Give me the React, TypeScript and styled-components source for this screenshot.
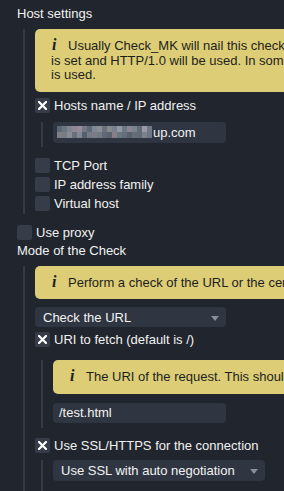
import React from "react"
import styled, { createGlobalStyle } from "styled-components"

const color = {
    bg: "#21262e",
    line: "#343b45",
    field: "#2f3641",
    box: "#363d48",
    help: "#dccd76",
    helpText: "#1e1e1e",
    text: "#f2f2f2",
    arrow: "#8b8f95",
}

const GlobalStyle = createGlobalStyle`
    html, body {
        margin: 0;
        padding: 0;
        overflow: hidden;
        background-color: ${color.bg};
    }
    body {
        font-family: "Liberation Sans", Arial, sans-serif;
        font-size: 13px;
        color: ${color.text};
    }
`

const Page = styled.div`
    width: 284px;
    height: 491px;
    overflow: hidden;
    padding: 6px 0 0 17px;
    box-sizing: border-box;
`

const Title = styled.div<{ $mt?: number }>`
    line-height: 16px;
    height: 16px;
    margin-top: ${p => p.$mt ?? 0}px;
    white-space: nowrap;
`

const Nest = styled.div<{ $mt?: number; $pb?: number }>`
    display: flex;
    flex-direction: column;
    align-items: flex-start;
    margin-left: 6px;
    margin-top: ${p => p.$mt ?? 0}px;
    padding-left: 10px;
    padding-bottom: ${p => p.$pb ?? 0}px;
    border-left: 2px solid ${color.line};
`

const Help = styled.div<{ $mt?: number }>`
    width: 600px;
    margin-top: ${p => p.$mt ?? 0}px;
    padding: 9px 16px;
    box-sizing: border-box;
    background-color: ${color.help};
    color: ${color.helpText};
    border-radius: 5px;
    line-height: 14.5px;
    white-space: nowrap;
`

const HelpIcon = styled.span`
    display: inline-block;
    width: 17px;
    padding-left: 1px;
    box-sizing: border-box;
    font-family: "Liberation Serif", "Times New Roman", serif;
    font-style: italic;
    font-weight: bold;
    font-size: 16px;
`

const Row = styled.label<{ $mt?: number }>`
    display: flex;
    align-items: center;
    gap: 4px;
    height: 15px;
    line-height: 15px;
    margin-top: ${p => p.$mt ?? 0}px;
    white-space: nowrap;
`

const Box = styled.span`
    display: flex;
    align-items: center;
    justify-content: center;
    width: 15px;
    height: 15px;
    border-radius: 2px;
    background-color: ${color.box};
`

const Field = styled.div<{ $w: number; $h: number; $pl: number; $mt?: number }>`
    display: flex;
    align-items: center;
    width: ${p => p.$w}px;
    height: ${p => p.$h}px;
    margin-top: ${p => p.$mt ?? 0}px;
    padding-left: ${p => p.$pl}px;
    box-sizing: border-box;
    border-radius: 4px;
    background-color: ${color.field};
    white-space: nowrap;
`

const Select = styled(Field)`
    justify-content: space-between;
    padding-right: 7px;
`

const Arrow = styled.span`
    width: 0;
    height: 0;
    margin-top: 2px;
    border-left: 4px solid transparent;
    border-right: 4px solid transparent;
    border-top: 5px solid ${color.arrow};
`

const Cross = () => (
    <svg width="9" height="9" viewBox="0 0 9 9">
        <path d="M1 1 L8 8 M8 1 L1 8" stroke="#ffffff" strokeWidth="2.2" strokeLinecap="square" />
    </svg>
)

const Check = ({ label, checked, mt }: { label: string; checked?: boolean; mt?: number }) => (
    <Row $mt={mt}>
        <Box>{checked && <Cross />}</Box>
        {label}
    </Row>
)

const blur = [
    "#5d6673", "#6b7480", "#7c8590", "#8d8896", "#9a8b98", "#737a86", "#5f6874",
    "#7e8793", "#8a8f97", "#6a727e", "#858b8c", "#76808c", "#9098a4", "#6e7783",
    "#8a8794", "#7a8390", "#626b78", "#9a9aa6", "#6f7987",
]

// pixelated (blurred out) part of the host name
const Pixelated = () => (
    <svg width="96" height="12" viewBox="0 0 96 12" style={{ display: "block" }}>
        {blur.map((c, i) => (
            <React.Fragment key={i}>
                <rect x={i * 5} y={0} width={5} height={6} fill={c} />
                <rect x={i * 5} y={6} width={5} height={6} fill={blur[(i * 7 + 3) % blur.length]} opacity={0.85} />
            </React.Fragment>
        ))}
    </svg>
)

export default function App() {
    return (
        <Page>
            <GlobalStyle />
            <Title>Host settings</Title>
            <Nest $mt={7} $pb={3}>
                <Help>
                    <HelpIcon>i</HelpIcon>Usually Check_MK will nail this check to the primary IP address of the host it is attached to.<br />
                    is set and HTTP/1.0 will be used. In some cases the host name of the target server must be<br />
                    is used.
                </Help>
                <Check label="Hosts name / IP address" checked mt={6} />
                <Nest $mt={9} $pb={4}>
                    <Field $w={173} $h={21} $pl={4}>
                        <Pixelated />
                        up.com
                    </Field>
                </Nest>
                <Check label="TCP Port" mt={11} />
                <Check label="IP address family" mt={4} />
                <Check label="Virtual host" mt={4} />
            </Nest>
            <Check label="Use proxy" mt={11} />
            <Title $mt={3}>Mode of the Check</Title>
            <Nest $mt={7} $pb={40}>
                <Help>
                    <HelpIcon>i</HelpIcon>Perform a check of the URL or the certificate expiration.
                </Help>
                <Select $w={191} $h={20} $pl={8} $mt={8}>
                    Check the URL
                    <Arrow />
                </Select>
                <Check label="URI to fetch (default is /)" checked mt={5} />
                <Nest $mt={13} $pb={5}>
                    <Help>
                        <HelpIcon>i</HelpIcon>The URI of the request. This should start with a '/' and not include the domain
                    </Help>
                    <Field $w={173} $h={20} $pl={6} $mt={9}>
                        /test.html
                    </Field>
                </Nest>
                <Check label="Use SSL/HTTPS for the connection" checked mt={10} />
                <Nest $mt={7} $pb={20}>
                    <Select $w={212} $h={21} $pl={8}>
                        Use SSL with auto negotiation
                        <Arrow />
                    </Select>
                </Nest>
            </Nest>
        </Page>
    )
}
